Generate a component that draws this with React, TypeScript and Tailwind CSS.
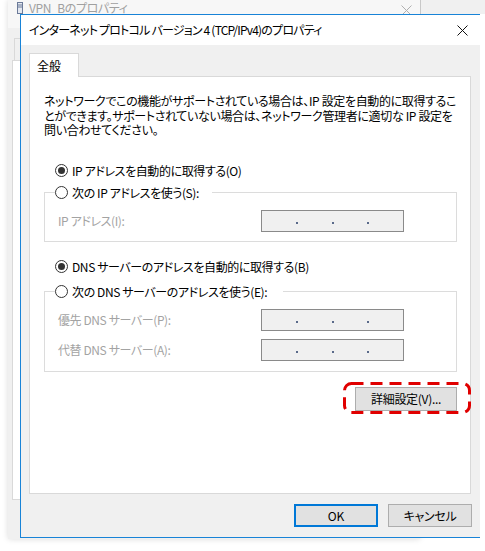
import React from 'react';

const font = "font-['Noto_Sans_CJK_JP','Noto_Sans',sans-serif] [font-feature-settings:'palt']";

const Radio = ({ checked }: { checked?: boolean }) => (
  <span className="w-[13px] h-[13px] rounded-full border border-[#333333] bg-white flex items-center justify-center shrink-0">
    {checked && <span className="w-[7px] h-[7px] rounded-full bg-[#333333]" />}
  </span>
);

const IpBox = () => (
  <div className="w-[143px] h-[22px] border border-[#8a8a8a] bg-[#f0f0f0] flex items-end justify-evenly pb-[7px]">
    <span className="w-[2px] h-[2px] bg-[#5a6a8a]" />
    <span className="w-[2px] h-[2px] bg-[#5a6a8a]" />
    <span className="w-[2px] h-[2px] bg-[#5a6a8a]" />
  </div>
);

const Field = ({ label }: { label: string }) => (
  <div className="flex items-center">
    <span className="w-[203px] text-[12px] tracking-[-0.4px] text-[#a3a3a3] leading-[16px] whitespace-pre">{label}</span>
    <IpBox />
  </div>
);

const App = () => {
  return (
    <div className={`relative w-[485px] h-[551px] bg-white overflow-hidden text-black ${font}`}>
      {/* background window */}
      <div className="absolute left-[8px] top-0 w-[412px] h-[539px] bg-[#f0f0f0] shadow-[0_0_6px_rgba(0,0,0,0.15)]">
        <div className="h-[28px] bg-[#f7f7f7] flex items-start pt-[1px] pl-[9px] gap-[6px]">
          <svg width="6" height="12" viewBox="0 0 6 12" className="mt-[1px]">
            <rect x="0.5" y="0.5" width="5" height="11" fill="#e4e8f0" stroke="#6b7a99" />
            <line x1="1" y1="3" x2="5" y2="3" stroke="#6b7a99" />
            <line x1="1" y1="5" x2="5" y2="5" stroke="#6b7a99" />
          </svg>
          <span className="text-[12px] tracking-[-0.4px] text-[#a0a0a0] leading-[14px]">VPN_Bのプロパティ</span>
          <svg width="11" height="11" viewBox="0 0 11 11" className="ml-auto mr-[8px] mt-[4px]">
            <path d="M0.5 0.5 L10.5 10.5 M10.5 0.5 L0.5 10.5" stroke="#b0b0b0" strokeWidth="1" />
          </svg>
        </div>
        <div className="ml-[6px] mt-[10px] w-[20px] h-[22px] border-l border-t border-[#d9d9d9]" />
        <div className="ml-[4px] w-[20px] h-[440px] border-l border-t border-b border-[#d9d9d9] bg-white" />
      </div>
      <div className="absolute left-[420px] top-0 w-[65px] h-[14px] border-l border-[#c8c8c8] bg-[#f0f0f0]" />

      {/* main dialog */}
      <div className="absolute left-[20px] top-[14px] w-[460px] h-[524px] border-l border-t border-b border-[#1883d7] bg-[#f0f0f0] flex flex-col">
        <div className="h-[30px] bg-white flex items-center pl-[8px] pr-[12px] shrink-0">
          <span className="text-[12px] tracking-[-0.8px] leading-[16px] whitespace-pre">インターネット プロトコル バージョン 4 (TCP/IPv4)のプロパティ</span>
          <svg width="11" height="11" viewBox="0 0 11 11" className="ml-auto">
            <path d="M0.5 0.5 L10.5 10.5 M10.5 0.5 L0.5 10.5" stroke="#111" strokeWidth="1" />
          </svg>
        </div>

        <div className="flex-1 flex flex-col pl-[8px] pr-[9px] pt-[8px] pb-[10px]">
          <div className="relative z-10 -mb-px w-[50px] h-[24px] bg-white border border-b-0 border-[#d9d9d9] pl-[7px] flex items-center">
            <span className="text-[12px] leading-[16px]">全般</span>
          </div>
          <div className="flex-1 bg-white border border-[#d9d9d9] pl-[14px] pr-[13px] pt-[17px] relative">
            <div className="text-[12px] tracking-[-0.35px] whitespace-pre">
              <div className="h-[14.5px] leading-[14.5px]">ネットワークでこの機能がサポートされている場合は、IP 設定を自動的に取得するこ</div>
              <div className="h-[14.5px] leading-[14.5px]">とができます。サポートされていない場合は、ネットワーク管理者に適切な IP 設定を</div>
              <div className="h-[14.5px] leading-[14.5px]">問い合わせてください。</div>
            </div>

            <div className="mt-[25px] ml-[11px] flex items-center gap-[4px] h-[16px]">
              <Radio checked />
              <span className="text-[12px] tracking-[-0.4px] leading-[16px] whitespace-pre">IP アドレスを自動的に取得する(O)</span>
            </div>

            <fieldset className="mt-[6px] border border-[#dcdcdc]">
              <legend className="ml-[10px] w-[157px] h-[16px] flex items-center gap-[4px] bg-white">
                <Radio />
                <span className="text-[12px] tracking-[-0.4px] leading-[16px] whitespace-pre">次の IP アドレスを使う(S):</span>
              </legend>
              <div className="pl-[13px] pt-[9px] pb-[9px]">
                <Field label="IP アドレス(I):" />
              </div>
            </fieldset>

            <div className="mt-[17px] ml-[11px] flex items-center gap-[4px] h-[16px]">
              <Radio checked />
              <span className="text-[12px] tracking-[-0.4px] leading-[16px] whitespace-pre">DNS サーバーのアドレスを自動的に取得する(B)</span>
            </div>

            <fieldset className="mt-[9px] border border-[#dcdcdc]">
              <legend className="ml-[10px] w-[228px] h-[16px] flex items-center gap-[4px] bg-white">
                <Radio />
                <span className="text-[12px] tracking-[-0.4px] leading-[16px] whitespace-pre">次の DNS サーバーのアドレスを使う(E):</span>
              </legend>
              <div className="pl-[13px] pt-[9px] pb-[10px] flex flex-col gap-[8px]">
                <Field label="優先 DNS サーバー(P):" />
                <Field label="代替 DNS サーバー(A):" />
              </div>
            </fieldset>

            <div className="mt-[13px] flex justify-end">
              <div className="relative">
                <button className="w-[102px] h-[24px] bg-[#e1e1e1] border border-[#adadad] text-[12px] tracking-[-0.3px] leading-[16px]">
                  詳細設定(V)...
                </button>
                {/* annotation */}
                <svg className="absolute left-[-12px] top-[-3px]" width="128" height="32" viewBox="0 0 128 32">
                  <rect x="1.5" y="1.5" width="125" height="29" rx="7" fill="none" stroke="#e00000" strokeWidth="3" strokeDasharray="12 7" />
                </svg>
              </div>
            </div>
          </div>

          <div className="mt-[10px] flex justify-end gap-[10px]">
            <button className="w-[84px] h-[23px] bg-[#e1e1e1] border-2 border-[#0078d7] text-[12px] leading-[16px]">OK</button>
            <button className="w-[84px] h-[23px] bg-[#e1e1e1] border border-[#adadad] text-[12px] tracking-[-0.3px] leading-[16px] -mr-[1px]">キャンセル</button>
          </div>
        </div>
      </div>
    </div>
  );
};

export default App;
